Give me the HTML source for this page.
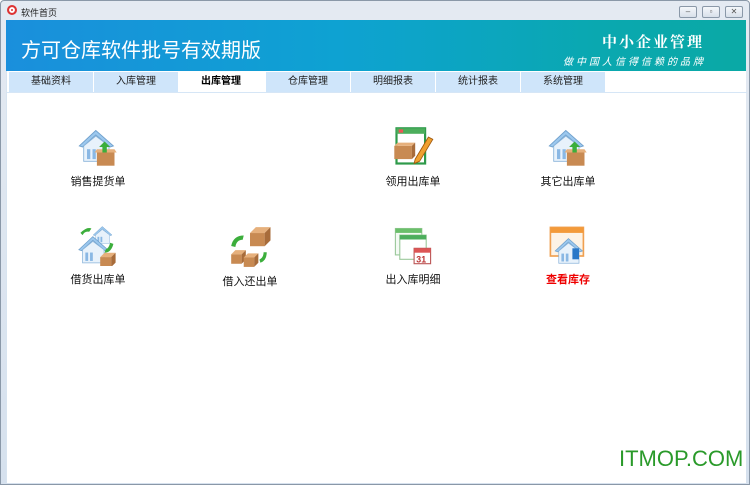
<!DOCTYPE html>
<html><head><meta charset="utf-8"><style>
*{margin:0;padding:0;box-sizing:border-box}
body{width:750px;height:485px;overflow:hidden;background:#fff;font-family:"Liberation Sans","Noto Sans CJK SC",sans-serif;position:relative}
.win{position:absolute;left:0;top:0;width:750px;height:485px;background:linear-gradient(#e4eaf2,#d6e1ee);border:1px solid #8a98a8;border-radius:4px 4px 0 0}
.title{position:absolute;left:20px;top:5px;font-size:9px;color:#222}
.logo{position:absolute;left:6px;top:4px;width:10px;height:10px;border-radius:50%;background:#d33;border:2px solid #d33;box-shadow:inset 0 0 0 2px #fff}
.btn{position:absolute;top:5px;width:18px;height:12px;border:1px solid #8a98a8;border-radius:2px;background:linear-gradient(#f4f7fb,#d8e0ea);font-size:8px;text-align:center;line-height:10px;color:#555}
.banner{position:absolute;left:5px;top:19px;width:740px;height:51px;background:linear-gradient(90deg,#1a8fdc 0%,#0ea2d2 45%,#0aa8b0 80%,#0aa9a5 100%)}
.bt{position:absolute;left:15px;top:14px;font-size:20px;color:#fff}
.br1{position:absolute;right:42px;top:11px;font-size:15px;color:#fff;font-family:"Liberation Serif","Noto Serif CJK SC",serif;font-weight:bold;letter-spacing:2px}
.br2{position:absolute;right:40px;top:33px;font-size:10px;color:#fff;font-style:italic;letter-spacing:3px}
.content{position:absolute;left:5px;top:70px;width:740px;height:412px;background:#fff;border-left:1px solid #d8e4f0}
.tab{position:absolute;top:1px;height:20px;width:84px;background:#cfe5fa;font-size:10px;color:#222;text-align:center;line-height:20px}
.tab.act{background:#fff;font-weight:bold;color:#000}
.line{position:absolute;left:0;top:21px;width:740px;height:1px;background:#d6e6f6}
.item{position:absolute;width:100px;text-align:center;font-size:11px;color:#111}
.item svg{display:block;margin:0 auto 5px}
.red{color:#e00;font-weight:bold}
.wm{position:absolute;left:619px;top:446px;font-size:22px;color:#2a9a2a;font-family:"Liberation Sans",sans-serif}
</style></head><body>
<div class="win">
<div class="logo"></div><div class="title">软件首页</div>
<div class="btn" style="left:678px">–</div><div class="btn" style="left:701px">▫</div><div class="btn" style="left:724px">✕</div>
<div class="banner"><div class="bt">方可仓库软件批号有效期版</div><div class="br1">中小企业管理</div><div class="br2">做中国人信得信赖的品牌</div></div>
<div class="content">
<div class="tab" style="left:2px">基础资料</div>
<div class="tab" style="left:87px">入库管理</div>
<div class="tab act" style="left:172px">出库管理</div>
<div class="tab" style="left:259px">仓库管理</div>
<div class="tab" style="left:344px">明细报表</div>
<div class="tab" style="left:429px">统计报表</div>
<div class="tab" style="left:514px">系统管理</div>
<div class="line"></div>
</div>
</div>

<svg width="0" height="0" style="position:absolute"><defs>
<g id="house"><path d="M3 18 L18 4 L34 18 L31 19 L18 8 L6 19Z" fill="#9cc8ee" stroke="#6fa0cc" stroke-width=".8"/><path d="M7 18 L18 9 L30 18 V32 H7Z" fill="#e8f2fb" stroke="#8ab4da" stroke-width=".8"/><rect x="10" y="21" width="3" height="9" fill="#8ab8e4"/><rect x="15" y="21" width="3" height="9" fill="#8ab8e4"/></g>
<g id="box"><path d="M0 4 L10 4 L14 0 L4 0Z" fill="#e6b07c"/><rect x="0" y="4" width="10" height="9" fill="#c88a52"/><path d="M10 4 L14 0 V9 L10 13Z" fill="#a86c3a"/></g>
<g id="h1"><use href="#house"/><g transform="translate(19,20)"><rect x="0" y="4" width="16" height="12" fill="#c88a52"/><path d="M-2 4 H18 L16 1 H0Z" fill="#e6b07c"/></g><path d="M26 14 L31 19 H28 V24 H24 V19 H21Z" fill="#3cae3c"/></g>
</defs></svg>

<div class="item" style="left:48px;top:126px"><svg width="44" height="42" viewBox="0 0 40 38"><use href="#h1"/></svg>销售提货单</div>
<div class="item" style="left:363px;top:126px"><svg width="44" height="42" viewBox="0 0 40 38"><rect x="5" y="2" width="26" height="32" fill="#fff" stroke="#2e9a4a" stroke-width="2"/><rect x="5" y="2" width="26" height="5" fill="#4cae5c"/><rect x="7" y="3" width="4" height="3" fill="#e55"/><g transform="translate(3,14)"><rect x="0" y="4" width="16" height="12" fill="#c88a52"/><path d="M0 4 H16 L19 1 H3Z" fill="#e6b07c"/><path d="M16 4 L19 1 V13 L16 16Z" fill="#a86c3a"/></g><path d="M22 30 L34 10 L38 12 L26 32 L21 34Z" fill="#f0a030" stroke="#a05a10" stroke-width=".8"/></svg>领用出库单</div>
<div class="item" style="left:518px;top:126px"><svg width="44" height="42" viewBox="0 0 40 38"><use href="#h1"/></svg>其它出库单</div>

<div class="item" style="left:48px;top:224px"><svg width="44" height="42" viewBox="0 0 40 38"><g transform="translate(14,0) scale(.55)"><use href="#house"/></g><g transform="translate(0,8) scale(.85)"><use href="#house"/></g><g transform="translate(22,26)"><use href="#box"/></g><path d="M4 8 Q10 2 14 4 L12 7 Q8 6 6 10Z" fill="#3cae3c"/><path d="M34 18 Q32 26 26 26 L27 23 Q30 22 31 17Z" fill="#3cae3c"/></svg>借货出库单</div>
<div class="item" style="left:200px;top:224px"><svg width="46" height="44" viewBox="0 0 44 40"><g transform="translate(22,2) scale(1.4)"><use href="#box"/></g><g transform="translate(4,24)"><use href="#box"/></g><g transform="translate(16,27)"><use href="#box"/></g><path d="M4 20 Q6 10 16 10 L15 14 Q9 14 8 21Z" fill="#3cae3c"/><path d="M38 26 Q38 34 32 36 L31 33 Q35 31 35 26Z" fill="#3cae3c"/></svg>借入还出单</div>
<div class="item" style="left:363px;top:224px"><svg width="44" height="42" viewBox="0 0 40 38"><rect x="4" y="4" width="24" height="24" fill="#f4faf4" stroke="#9ac89a"/><rect x="4" y="4" width="24" height="4" fill="#6abf6a"/><rect x="8" y="10" width="24" height="22" fill="#fff" stroke="#9ac89a"/><rect x="8" y="10" width="24" height="4" fill="#4cae5c"/><rect x="21" y="22" width="15" height="14" fill="#fff" stroke="#b55"/><rect x="21" y="22" width="15" height="4" fill="#d55"/><text x="23" y="35" font-size="8" font-weight="bold" fill="#b33" font-family="Liberation Sans">31</text></svg>出入库明细</div>
<div class="item red" style="left:518px;top:224px"><svg width="44" height="42" viewBox="0 0 40 38"><rect x="4" y="3" width="30" height="26" fill="#fdf3e6" stroke="#f0a050" stroke-width="1.5"/><rect x="4" y="3" width="30" height="5" fill="#f39a3a"/><g transform="translate(6,10) scale(.8)"><use href="#house"/></g><rect x="24" y="22" width="6" height="10" fill="#2a78c8"/></svg>查看库存</div>

<div class="wm">ITMOP.COM</div>
</body></html>
